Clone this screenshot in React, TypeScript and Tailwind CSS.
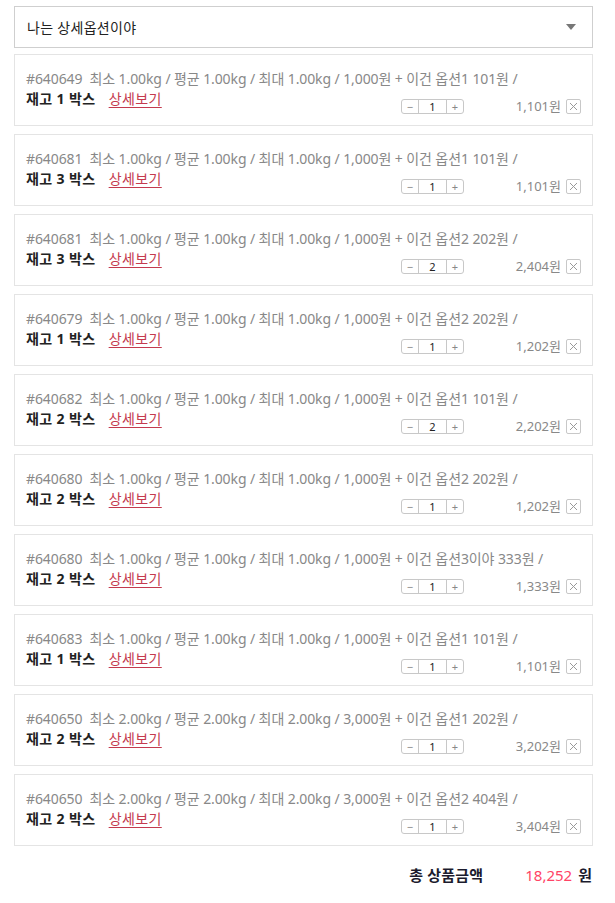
interface OptionItem {
  code: string;
  weight: string;
  base: string;
  option: string;
  extra: string;
  stock: number;
  qty: number;
  price: string;
}

const items: OptionItem[] = [
  { code: "#640649", weight: "1.00kg", base: "1,000원", option: "이건 옵션1", extra: "101원", stock: 1, qty: 1, price: "1,101원" },
  { code: "#640681", weight: "1.00kg", base: "1,000원", option: "이건 옵션1", extra: "101원", stock: 3, qty: 1, price: "1,101원" },
  { code: "#640681", weight: "1.00kg", base: "1,000원", option: "이건 옵션2", extra: "202원", stock: 3, qty: 2, price: "2,404원" },
  { code: "#640679", weight: "1.00kg", base: "1,000원", option: "이건 옵션2", extra: "202원", stock: 1, qty: 1, price: "1,202원" },
  { code: "#640682", weight: "1.00kg", base: "1,000원", option: "이건 옵션1", extra: "101원", stock: 2, qty: 2, price: "2,202원" },
  { code: "#640680", weight: "1.00kg", base: "1,000원", option: "이건 옵션2", extra: "202원", stock: 2, qty: 1, price: "1,202원" },
  { code: "#640680", weight: "1.00kg", base: "1,000원", option: "이건 옵션3이야", extra: "333원", stock: 2, qty: 1, price: "1,333원" },
  { code: "#640683", weight: "1.00kg", base: "1,000원", option: "이건 옵션1", extra: "101원", stock: 1, qty: 1, price: "1,101원" },
  { code: "#640650", weight: "2.00kg", base: "3,000원", option: "이건 옵션1", extra: "202원", stock: 2, qty: 1, price: "3,202원" },
  { code: "#640650", weight: "2.00kg", base: "3,000원", option: "이건 옵션2", extra: "404원", stock: 2, qty: 1, price: "3,404원" },
];

function QtyBox({ qty }: { qty: number }) {
  return (
    <div className="flex h-[15px] w-[63px] items-stretch rounded-[3px] border border-[#c8c8c8] text-[11px] leading-none text-[#888]">
      <span className="flex w-[16px] items-center justify-center">−</span>
      <span className="flex flex-1 items-center justify-center border-x border-[#c8c8c8] text-[#222]">{qty}</span>
      <span className="flex w-[16px] items-center justify-center">+</span>
    </div>
  );
}

function RemoveBtn() {
  return (
    <span className="flex h-[15px] w-[15px] items-center justify-center rounded-[2px] border border-[#c8c8c8]">
      <svg width="9" height="9" viewBox="0 0 9 9">
        <path d="M1 1L8 8M8 1L1 8" stroke="#999" strokeWidth="1" fill="none" />
      </svg>
    </span>
  );
}

function ItemCard({ item }: { item: OptionItem }) {
  return (
    <div className="h-[72px] border border-[#e4e4e4] bg-white px-[11px] pt-[14px]">
      <div className="whitespace-nowrap text-[14px] leading-[20px] tracking-[-0.1px] text-[#888]">
        {item.code}&nbsp;&nbsp;최소 {item.weight} / 평균 {item.weight} / 최대 {item.weight} / {item.base} + {item.option} {item.extra} /
      </div>
      <div className="flex items-start justify-between">
        <div className="flex items-center text-[14px] leading-[20px] tracking-[0.4px]">
          <span className="font-bold text-[#222]">재고 {item.stock} 박스</span>
          <span className="ml-[13px] text-[#c43a4e] underline underline-offset-[3px]">상세보기</span>
        </div>
        <div className="mt-[10px] flex items-center">
          <QtyBox qty={item.qty} />
          <span className="ml-[52px] text-[13px] leading-[15px] text-[#888]">{item.price}</span>
          <span className="ml-[5px]">
            <RemoveBtn />
          </span>
        </div>
      </div>
    </div>
  );
}

export default function App() {
  return (
    <div
      className="min-h-[903px] w-[615px] bg-white pl-[14px] pr-[22px] pt-[6px]"
      style={{ fontFamily: '"Noto Sans", "Noto Sans CJK KR", sans-serif' }}
    >
      <div className="flex h-[42px] items-center justify-between border border-[#cfcfcf] pl-[12px] pr-[16px]">
        <span className="text-[14px] tracking-[0.3px] text-[#222]">나는 상세옵션이야</span>
        <svg width="10" height="6" viewBox="0 0 10 6">
          <path d="M0 0H10L5 6Z" fill="#777" />
        </svg>
      </div>
      <div className="mt-[6px] flex flex-col gap-[8px]">
        {items.map((item, i) => (
          <ItemCard key={i} item={item} />
        ))}
      </div>
      <div className="mt-[18px] flex items-center justify-end pr-[1px] text-[15px]">
        <span className="font-bold tracking-[0.2px] text-[#1c1c2e]">총 상품금액</span>
        <span className="ml-[42px] text-[#ff4466]">18,252</span>
        <span className="ml-[6px] font-bold text-[#1c1c2e]">원</span>
      </div>
    </div>
  );
}
